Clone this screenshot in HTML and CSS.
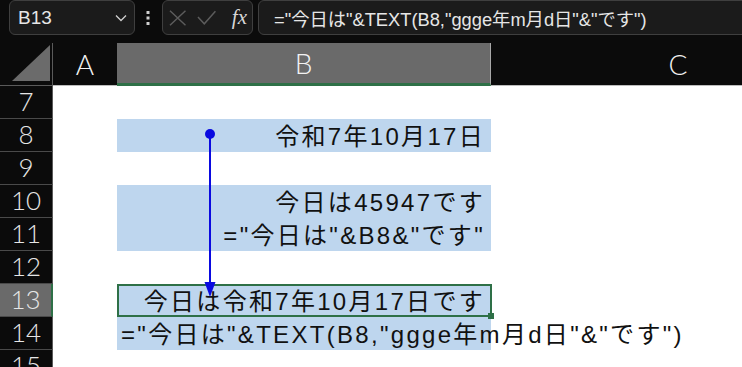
FILE: index.html
```html
<!DOCTYPE html>
<html lang="ja">
<head>
    <meta charset="UTF-8">
    <title>TEXT関数 - 和暦</title>
    <link rel="stylesheet" href="styles.css">
</head>
<body>
    <div class="toolbar">
        <div class="namebox">
            <span>B13</span>
            <svg class="chevron" width="12" height="8" viewBox="0 0 12 8"><path d="M1 1.5 L6 6.5 L11 1.5" fill="none" stroke="#cfcfcf" stroke-width="1.3"/></svg>
        </div>
        <svg class="dots" width="4" height="14" viewBox="0 0 4 14"><rect x="0.5" y="0" width="3" height="3" fill="#cfcfcf"/><rect x="0.5" y="5.5" width="3" height="3" fill="#cfcfcf"/><rect x="0.5" y="11" width="3" height="3" fill="#cfcfcf"/></svg>
        <div class="fnbox">
            <svg width="18" height="16" viewBox="0 0 18 16"><path d="M1 0.5 L17 15.5 M17 0.5 L1 15.5" stroke="#5c5c5c" stroke-width="1.5"/></svg>
            <svg width="20" height="16" viewBox="0 0 20 16"><path d="M1 7 L7.5 14 L19 1" fill="none" stroke="#5c5c5c" stroke-width="1.5"/></svg>
            <span class="fx">fx</span>
        </div>
        <div class="formula">="今日は"&amp;TEXT(B8,"ggge年m月d日"&amp;"です")</div>
    </div>

    <div class="sheet">
        <div class="colhead">
            <div class="corner"><svg width="38" height="36" viewBox="0 0 38 36"><polygon points="0,36 38,0 38,36" fill="#6b6b6b"/></svg></div>
            <div class="ch">A</div>
            <div class="ch sel">B</div>
            <div class="ch">C</div>
        </div>

        <div class="row"><div class="rh">7</div><div></div><div></div><div></div></div>
        <div class="row"><div class="rh">8</div><div></div><div class="cell fill right">令和7年10月17日</div><div></div></div>
        <div class="row"><div class="rh">9</div><div></div><div></div><div></div></div>
        <div class="row"><div class="rh">10</div><div></div><div class="cell fill right">今日は45947です</div><div></div></div>
        <div class="row"><div class="rh">11</div><div></div><div class="cell fill right">="今日は"&amp;B8&amp;"です"</div><div></div></div>
        <div class="row"><div class="rh">12</div><div></div><div></div><div></div></div>
        <div class="row"><div class="rh active">13</div><div></div><div class="cell fill right current">今日は令和7年10月17日です</div><div></div></div>
        <div class="row"><div class="rh">14</div><div></div><div class="cell fill">="今日は"&amp;TEXT(B8,"ggge年m月d日"&amp;"です")</div><div></div></div>
        <div class="row"><div class="rh">15</div><div></div><div></div><div></div></div>

        <!-- trace precedents arrow -->
        <svg class="arrow" width="20" height="180" viewBox="0 0 20 180">
            <circle cx="10" cy="5" r="5" fill="#0a0ae0"/>
            <line x1="10" y1="5" x2="10" y2="160" stroke="#0a0ae0" stroke-width="2"/>
            <polygon points="4.5,153 15.5,153 10,168" fill="#0a0ae0"/>
        </svg>
    </div>
</body>
</html>
```

FILE: styles.css
```css
body {
    margin: 0;
    background-color: #0b0b0b;
    overflow: hidden;
    font-family: "Liberation Sans", "Noto Sans CJK JP", sans-serif;
}

/* formula bar */
.toolbar {
    display: flex;
    align-items: center;
    height: 43px;
    padding: 0 0 8px 9px;
    box-sizing: border-box;
    overflow: hidden;
}

.namebox {
    display: flex;
    align-items: center;
    justify-content: space-between;
    width: 126px;
    height: 35px;
    box-sizing: border-box;
    padding: 0 7px 0 8px;
    border: 1px solid #3f3f3f;
    border-radius: 6px;
    background-color: #1b1b1b;
    color: #e6e6e6;
    font-size: 19px;
}

.dots {
    margin: 0 12px 0 11px;
}

.fnbox {
    display: flex;
    align-items: center;
    width: 91px;
    height: 35px;
    box-sizing: border-box;
    padding: 0 5px 0 6px;
    gap: 11px;
    border: 1px solid #3f3f3f;
    border-radius: 6px;
    background-color: #1b1b1b;
}

.fx {
    margin-left: 4px;
    color: #d6d6d6;
    font-family: "Liberation Serif", "DejaVu Serif", serif;
    font-style: italic;
    font-size: 21px;
}

.formula {
    flex: 1;
    height: 35px;
    margin-left: 5px;
    margin-right: -8px;
    box-sizing: border-box;
    padding: 4px 0 0 15px;
    border: 1px solid #3f3f3f;
    border-radius: 6px;
    background-color: #1b1b1b;
    color: #e6e6e6;
    font-size: 18.3px;
    white-space: nowrap;
}

/* sheet */
.sheet {
    position: relative;
    overflow: hidden;
}

.colhead,
.row {
    display: grid;
    grid-template-columns: 53px 64px 374px 374px;
}

.colhead {
    grid-template-rows: 43px;
}

.corner {
    display: flex;
    align-items: flex-end;
    justify-content: flex-end;
    padding: 0 2px 4px 0;
    border-right: 1px solid #5a5a5a;
    border-bottom: 1px solid #5a5a5a;
}

.ch {
    display: flex;
    align-items: center;
    justify-content: center;
    color: #f2f2f2;
    font-family: Lato, "Liberation Sans", sans-serif;
    font-weight: 300;
    font-size: 28px;
    line-height: 1;
    border-bottom: 1px solid #bdbdbd;
}

.ch.sel {
    background-color: #6a6a6a;
    border-right: 1px solid #a8a8a8;
    border-bottom: 3px solid #2e7047;
}

.row {
    grid-template-rows: 33px;
    background-color: #ffffff;
}

.rh {
    display: flex;
    align-items: center;
    justify-content: center;
    padding-bottom: 3px;
    box-sizing: border-box;
    background-color: #0b0b0b;
    color: #e6e6e6;
    font-family: Lato, "Liberation Sans", sans-serif;
    font-weight: 300;
    font-size: 26px;
    line-height: 1;
    border-right: 1px solid #5a5a5a;
    border-bottom: 1px solid #4a4a4a;
}

.rh.active {
    background-color: #6a6a6a;
    border-right: 2px solid #2e7047;
}

.cell {
    display: flex;
    align-items: center;
    padding: 3px 6px 0 4px;
    box-sizing: border-box;
    color: #111111;
    font-size: 24px;
    line-height: 1;
    letter-spacing: 2.3px;
    white-space: nowrap;
}

.cell.fill {
    background-color: #bed6ee;
}

.cell.right {
    justify-content: flex-end;
}

.cell.current {
    position: relative;
    margin-right: -1px;
    padding-right: 5px;
    border: 2px solid #2e7047;
}

.cell.current::after {
    content: "";
    position: absolute;
    right: -4px;
    bottom: -4px;
    width: 6px;
    height: 6px;
    background-color: #2e7047;
}

.arrow {
    position: absolute;
    left: 200px;
    top: 86px;
}
```
